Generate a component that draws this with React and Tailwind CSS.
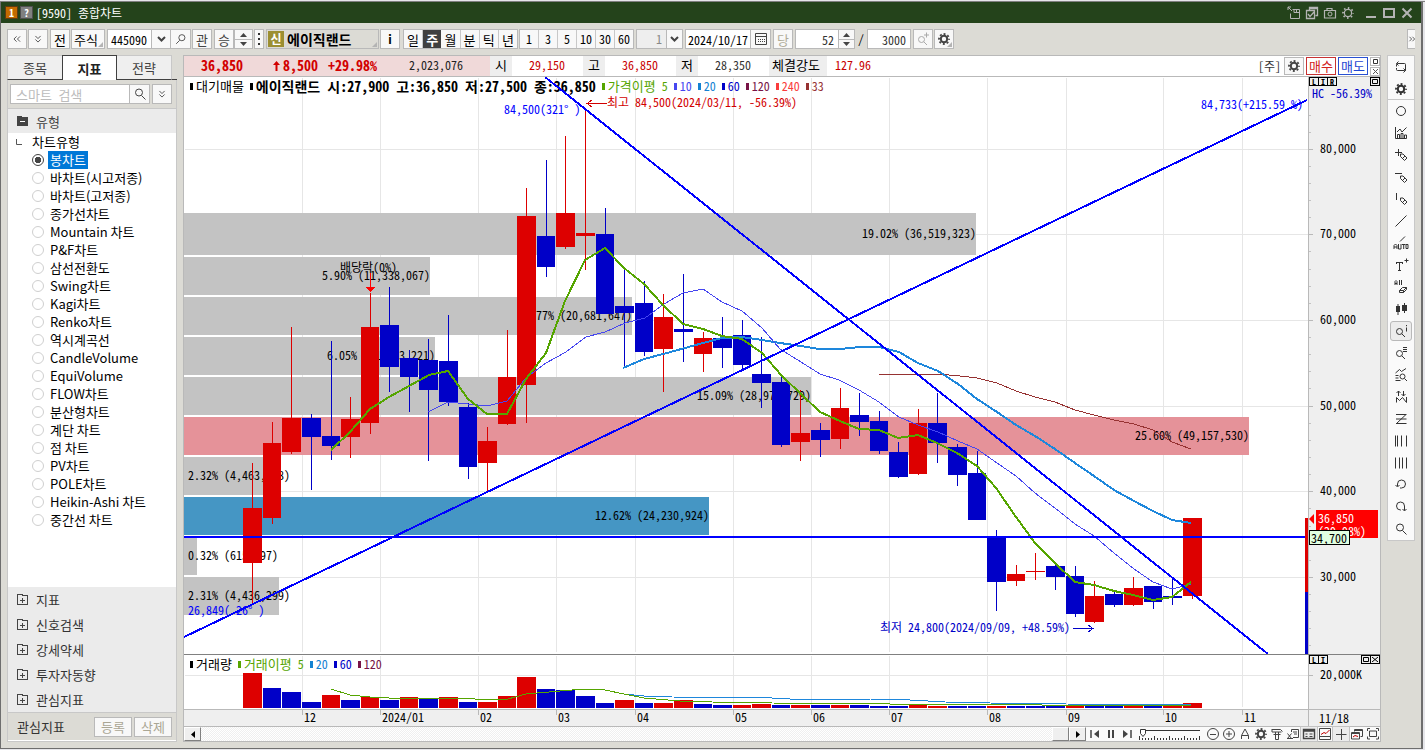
import React from "react";

const X0 = 184;
const PLOT_W = 1124;
const Y0 = 77;
const PLOT_H = 577;
const RED = "#dd0000";
const BLUE = "#0000c8";

const MONTHS = [
  [302, "12"], [380, "2024/01"], [478, "02"], [556, "03"], [635, "04"], [733, "05"],
  [811, "06"], [889, "07"], [987, "08"], [1066, "09"], [1163, "10"], [1242, "11"],
];
const PRICES = [[149, "80,000"], [234, "70,000"], [320, "60,000"], [406, "50,000"], [491, "40,000"], [577, "30,000"]];
const MINOR = [115, 132, 166, 183, 200, 217, 251, 269, 286, 303, 337, 354, 371, 388, 423, 440, 457, 474, 508, 526, 543, 560, 594, 611, 628, 645];

const BANDS = [
  [213, 42, 976, "#c3c3c3"], [257, 38, 430, "#c3c3c3"], [297, 38, 632, "#c3c3c3"], [337, 38, 435, "#c3c3c3"],
  [377, 38, 811, "#c3c3c3"], [417, 38, 1249, "#e59299"], [457, 38, 279, "#c3c3c3"], [497, 38, 709, "#4596c4"],
  [538, 37, 197, "#c3c3c3"], [577, 38, 279, "#c3c3c3"],
];

// left, width, body top, body bottom, high, low, centre, rising, volume top, volume rising
const CANDLES = [
  [243, 19, 508, 563, 463, 604, 252, 1, 673, 1],
  [263, 18, 443, 518, 422, 524, 272, 1, 688, 0],
  [282, 19, 418, 452, 327, 454, 291, 1, 692, 0],
  [302, 19, 418, 437, 414, 490, 311, 0, 702, 0],
  [322, 18, 436, 446, 341, 460, 331, 0, 695, 1],
  [341, 19, 419, 437, 397, 458, 350, 1, 700, 0],
  [361, 18, 327, 423, 293, 434, 370, 1, 697, 1],
  [380, 19, 325, 367, 287, 392, 389, 0, 700, 0],
  [400, 18, 358, 377, 350, 412, 409, 0, 697, 1],
  [419, 19, 360, 390, 339, 461, 428, 0, 699, 0],
  [439, 19, 361, 402, 315, 406, 448, 0, 697, 1],
  [459, 18, 407, 467, 403, 479, 468, 0, 702, 0],
  [478, 19, 441, 463, 427, 492, 487, 1, 702, 1],
  [498, 18, 377, 424, 330, 425, 507, 1, 696, 1],
  [517, 19, 216, 385, 188, 423, 526, 1, 677, 1],
  [537, 18, 236, 267, 160, 277, 546, 0, 689, 0],
  [556, 19, 213, 247, 136, 249, 565, 1, 690, 0],
  [576, 19, 233, 236, 110, 270, 585, 1, 696, 0],
  [596, 18, 234, 314, 208, 314, 605, 0, 703, 0],
  [615, 19, 306, 313, 269, 368, 624, 0, 700, 1],
  [635, 18, 303, 352, 281, 356, 644, 0, 703, 0],
  [654, 19, 317, 349, 294, 392, 663, 1, 703, 1],
  [674, 19, 329, 332, 274, 362, 683, 0, 700, 1],
  [694, 18, 338, 354, 332, 372, 703, 1, 704, 0],
  [713, 19, 338, 348, 317, 368, 722, 0, 705, 0],
  [733, 18, 335, 365, 320, 370, 742, 0, 705, 1],
  [752, 19, 374, 383, 337, 408, 761, 0, 704, 1],
  [772, 18, 382, 445, 376, 447, 781, 0, 705, 0],
  [791, 19, 433, 442, 390, 461, 800, 1, 705, 1],
  [811, 19, 430, 440, 423, 457, 820, 0, 705, 0],
  [831, 18, 408, 439, 388, 449, 840, 1, 705, 1],
  [850, 19, 415, 422, 393, 436, 859, 0, 705, 0],
  [870, 18, 421, 451, 411, 454, 879, 0, 706, 0],
  [889, 19, 452, 477, 442, 478, 898, 0, 706, 0],
  [909, 18, 423, 474, 409, 475, 918, 1, 705, 1],
  [928, 19, 423, 443, 393, 463, 937, 0, 706, 1],
  [948, 19, 447, 475, 444, 486, 957, 0, 706, 0],
  [968, 18, 473, 520, 451, 520, 977, 0, 706, 0],
  [987, 19, 538, 582, 530, 611, 996, 0, 706, 1],
  [1007, 18, 574, 581, 565, 586, 1016, 1, 706, 0],
  [1026, 19, 571, 572, 553, 580, 1035, 1, 706, 0],
  [1046, 19, 566, 577, 565, 590, 1055, 0, 706, 0],
  [1066, 18, 576, 614, 566, 617, 1075, 0, 706, 1],
  [1085, 19, 596, 622, 581, 623, 1094, 1, 706, 0],
  [1105, 18, 594, 605, 592, 607, 1114, 0, 706, 0],
  [1124, 19, 588, 605, 577, 606, 1133, 1, 706, 1],
  [1144, 18, 586, 602, 586, 609, 1153, 0, 706, 0],
  [1163, 19, 596, 598, 578, 605, 1172, 0, 706, 1],
  [1183, 19, 518, 596, 518, 599, 1192, 1, 703, 1],
];

const MA5 = "331,450 350,432 370,409 389,397 409,386 429,375 448,371 468,399 487,414 507,414 526,379 546,353 565,301 585,260 605,248 624,268 644,284 663,305 683,324 703,329 722,336 742,339 762,353 782,376 801,394 820,412 840,421 859,429 879,430 898,438 918,435 937,443 957,453 977,466 996,488 1016,517 1035,543 1055,563 1075,582 1094,585 1114,591 1133,595 1153,600 1172,597 1191,582";
const MA10 = "428,412 448,402 468,404 487,406 507,401 526,378 546,363 566,352 586,337 605,332 625,323 645,318 664,304 683,293 703,289 722,302 742,311 762,328 780,349 801,362 820,374 839,380 859,390 879,402 899,417 918,425 938,432 958,441 977,449 997,463 1016,476 1035,493 1055,508 1075,524 1094,536 1114,553 1134,569 1153,582 1172,589 1191,584";
const MA20 = "623,368 644,359 667,353 703,343 722,338 742,337 762,340 780,343 801,346 819,349 840,349 860,347 879,347 887,349 899,352 918,363 938,371 958,384 977,399 997,412 1016,425 1035,436 1055,449 1075,463 1094,476 1114,490 1134,501 1153,511 1172,520 1191,523";
const MA33 = "879,375 890,374 918,374 938,374 960,376 977,378 997,383 1016,391 1035,397 1055,402 1075,410 1094,415 1114,420 1134,424 1153,430 1172,442 1191,449";
const VMA5 = "331,689 350,695 370,697 389,698 420,698 460,698 475,699 508,699 526,694 560,691 585,689 605,690 624,694 644,698 680,701 712,702 772,703 890,704 1191,706";
const VMA20 = "624,694 644,696 672,697 772,698 790,699 870,699 910,700 945,702 990,703 1066,704 1191,705";

const TREE = [
  "봉차트", "바차트(시고저종)", "바차트(고저종)", "종가선차트", "Mountain 차트", "P&F차트", "삼선전환도", "Swing차트",
  "Kagi차트", "Renko차트", "역시계곡선", "CandleVolume", "EquiVolume", "FLOW차트", "분산형차트", "계단 차트", "점 차트",
  "PV차트", "POLE차트", "Heikin-Ashi 차트", "중간선 차트",
];

/* ---------- icons ---------- */

function Icon({ children, size = 16, className = "" }) {
  return (
    <svg width={size} height={size} viewBox="0 0 16 16" fill="none" stroke="currentColor" strokeWidth="1" className={`shrink-0 ${className}`} aria-hidden="true">
      {children}
    </svg>
  );
}

const gear = (
  <>
    <circle cx="8" cy="8" r="3.2" strokeWidth="2" />
    <circle cx="8" cy="8" r="5" strokeWidth="1.8" strokeDasharray="1.96 1.967" strokeDashoffset="0.98" />
  </>
);
const gearThin = (
  <>
    <circle cx="8" cy="8" r="3.6" strokeWidth="1.2" />
    <circle cx="8" cy="8" r="5" strokeWidth="1.8" strokeDasharray="1.5 2.427" strokeDashoffset="0.75" />
  </>
);
const glass = <path d="M10.5 6.5a3.5 3.5 0 1 1-7 0a3.5 3.5 0 1 1 7 0zM9.5 9.5L13.5 13.5" />;
const glassLow = <path d="M9.5 8.5a3 3 0 1 1-6 0a3 3 0 1 1 6 0zM8.8 10.8L12 14" />;
const pencil = <path d="M7.5 9.5v-2.5h2.5l4 4l-2.5 2.5zM9.5 11.5l2.5-2.5" />;
const chevRight = <path d="M4.5 5l3 3l-3 3M8.5 5l3 3l-3 3" />;
const chevLeft = <path d="M7.5 5l-3 3l3 3M11.5 5l-3 3l3 3" />;
const chevDown = <path d="M5 4.5l3 3l3-3M5 8.5l3 3l3-3" />;

const SIDE_TOOLS = [
  ["새로고침", <path d="M3.5 7.5V5.5a1 1 0 0 1 1-1h7a1 1 0 0 1 1 1v6M5.5 2.5l-2 2l2 2M12.5 8.5v2a1 1 0 0 1-1 1h-7a1 1 0 0 1-1-1v-1.5M10.500 13.500l2-2l-2-2" />],
  ["설정", gear],
  ["원", <circle cx="8" cy="8" r="4.500" />],
  ["지표 차트", <path d="M2.500 2v11.500h11M4.500 13V9.500h2V13M8 13V8.500h2V13M11.500 13V10h2v3.500M4 7l3-3l2 3l4.500-4.500" />],
  ["십자선", <><path d="M2 5.500h7M5.500 2v7" />{pencil}</>],
  ["수평선", <><path d="M2 4.500h7" />{pencil}</>],
  ["수직선", <><path d="M3.500 2v7" />{pencil}</>],
  ["추세선", <path d="M2.500 13.500L13.500 2.500" />],
  ["자동추세선", <><path d="M7 6.500L12 1.500" /><path d="M1 14V10.500l1.500-1.500L4 10.500V14M1 12h3M5.500 9v5h2.500V9M9 9.500h3.500M10.700 9.500V14M13 9.500h2v4h-2z" /></>],
  ["문자", <path d="M3 5.500h7M3.500 5v2M9.500 5v2M6.500 5.500v8M5 13.500h3M11.500 3.500h4M13.500 1.500v4" />],
  ["모두 지우기", <><path d="M2 6V2.500L3 1.500l1 1V6M2 4.500h2M6.500 1v5M8.500 1v5" /><path d="M6.500 13.500v-2l3-3h4v2l-3 3zM6.500 11.500h4l3-3M10.500 11.500v2" /></>],
  ["봉", <><rect x="3" y="5" width="4" height="6" fill="currentColor" stroke="none" /><rect x="9" y="4" width="5" height="6" fill="currentColor" stroke="none" /><path d="M5 3v11M11.500 2v10" /></>],
  ["데이터 보기", <>{glassLow}<path d="M13.500 4.500v4M13.500 2v1.200" /></>],
  ["목록 검색", <>{glassLow}<path d="M10 2.500h4M10 4.500h4M10 6.500h4" /></>],
  ["차트 검색", <><path d="M2.500 6l4-3.500l2 2l4.500-3M2.500 8.500h3M2.500 11h3M2.500 13.500h5" /><circle cx="9.500" cy="9.500" r="2.500" /><path d="M11.500 11.500l2.500 2.500" /></>],
  ["패턴", <path d="M3.500 13.500V8.500l3 3l3-3l4 5V8M5.500 7V2M3.500 4l2-2l2 2M10.500 2v5M8.500 5l2 2l2-2" />],
  ["피보나치", <path d="M3 3.500h10.500M3 8h10.500M3 12.500h10.500M13 3.500l-9.500 9" />],
  ["등분선", <path d="M2.500 2.500v11M4.500 2.500v11M8.500 2.500v11M13.500 2.500v11" />],
  ["균등선", <path d="M2.500 2.500v11M6.500 2.500v11M9.500 2.500v11M13.500 2.500v11" />],
  ["실행 취소", <path d="M4.500 9V7a4 4 0 1 1 4 4h-1.500M2.500 8l2 2l2-2" />],
  ["다시 실행", <path d="M8 11H7.500a4 4 0 1 1 4-4v4.500M9.500 10l2 2l2-2" />],
  ["찾기", glass],
];

const FOOT_TOOLS = [
  ["축소", <><circle cx="8" cy="8" r="5.500" /><path d="M5 8.500h6" /></>],
  ["확대", <><circle cx="8" cy="8" r="5.500" /><path d="M5 8h6M8 5v6" /></>],
  ["글꼴", <path d="M4.500 13V9.500L8 3l3.500 6.500V13M4.500 9.500h7" />],
  ["환경설정", gear],
  ["도구", <path d="M3 3.500h8.500l2 2M3 3v3h9.500M6.500 6v7.500h3V6M4.500 8.500h7" />],
  ["내보내기", <path d="M6.500 6V3.500h7v8H8M8 6h4M9 8h3M2.500 7.500l4 5M6.500 7.500l-4 5M2 12.500h6" />],
  ["데이터창", <><path d="M2.500 3.500h11v9h-11zM2.500 5h11" strokeWidth="1.400" /><path d="M4.500 8h2M4.500 10.500h2M8.500 8h3M8.500 10.500h3" /></>],
  ["지표창", <><path d="M2.500 2.500h11v11h-11zM2.500 10.500h11" /><path d="M4 8.500l3-2l2 1l3.500-3.500" stroke="#c00000" /></>],
  ["십자선", <path d="M3 8.500h10.500M8.500 3v11" />],
  ["창 복사", <><path d="M5.500 5.500v-2h8v7h-2M5.500 4.500h8M2.500 6.500h8v6.500h-8zM2.500 7.500h8" /><path d="M4 11l2-1.500l3 1" stroke="#c00000" /></>],
  ["전체화면", <path d="M2.500 5V2.500H5M11 2.500h2.500V5M13.500 10.500V13H11M5 13H2.500v-2.500M4.500 5h7v5.500h-7z" />],
];
const FOOT_ACTIVE = [6, 8];

/* ---------- small controls ---------- */

const BTN = "flex h-5 shrink-0 items-center justify-center border border-[#b9b9b9] bg-[#f8f8f8]";

function Btn({ label, className = "w-5", children }) {
  return (
    <button type="button" aria-label={label} className={`${BTN} ${className}`}>
      {children}
    </button>
  );
}

function Stepper({ label, className }) {
  return (
    <div className={`flex shrink-0 flex-col justify-between border border-[#b9b9b9] bg-[#f8f8f8] ${className}`}>
      <button type="button" aria-label={`${label} 증가`} className="flex h-[9px] items-center justify-center">
        <svg width="7" height="4" viewBox="0 0 7 4" aria-hidden="true"><path d="M0 4L3.500 0L7 4z" fill="#444" /></svg>
      </button>
      <span className="h-px bg-[#b9b9b9]" />
      <button type="button" aria-label={`${label} 감소`} className="flex h-[8px] items-center justify-center">
        <svg width="7" height="4" viewBox="0 0 7 4" aria-hidden="true"><path d="M0 0L3.500 4L7 0z" fill="#444" /></svg>
      </button>
    </div>
  );
}

const Chevron = () => (
  <svg width="9" height="6" viewBox="0 0 9 6" aria-hidden="true"><path d="M1 1L4.500 4.500L8 1" fill="none" stroke="#444" strokeWidth="2" /></svg>
);
const Corner = () => (
  <svg width="5" height="5" viewBox="0 0 5 5" className="absolute right-px bottom-px" aria-hidden="true"><path d="M5 0V5H0z" fill="#b4b4b4" /></svg>
);

function TitleBar() {
  const tools = [
    ["창 분리", <path d="M2 2l4 4M2 5V2h3M6.500 4.500h7v9h-9v-5M8 4.500v3h6M10.500 4.500v3" />],
    ["화면 복사", <path d="M5.500 5V2.500h8v8h-2M2.500 5.500h8v8h-8zM4 9l2 2.500l4-4.500M5.500 3.500h8" strokeWidth="1.300" />],
    ["캡처", <><path d="M2.500 5.500h11v7.500h-11zM5 5v-1.500h5V5" strokeWidth="1.200" /><circle cx="8" cy="9" r="2" /></>],
    ["설정", gearThin],
  ];
  return (
    <header className="flex h-[21px] shrink-0 items-center bg-[#24431b] pr-[6px] pl-1 text-white">
      <span className="flex size-[13px] items-center justify-center border border-[#5f3a10] bg-[#c46a00] text-[10px] leading-none font-bold">1</span>
      <span className="ml-[2px] flex size-[13px] items-center justify-center border border-[#4f4f4f] bg-[#808080] text-[10px] leading-none font-bold">?</span>
      <h1 className="ml-[3px] text-xs leading-4">[9590] 종합차트</h1>
      <div className="ml-auto flex items-center gap-[2px] text-[#b4b4b4]">
        {tools.map(([l, d]) => (
          <button key={l} type="button" aria-label={l}><Icon>{d}</Icon></button>
        ))}
        <button type="button" aria-label="최소화" className="ml-[5px]"><Icon><path d="M3 12h10" strokeWidth="2" /></Icon></button>
        <button type="button" aria-label="최대화"><Icon><path d="M3 4h10v8H3z" strokeWidth="2" /></Icon></button>
        <button type="button" aria-label="닫기"><Icon><path d="M3.500 3.500l9 9M12.500 3.500l-9 9" strokeWidth="2" /></Icon></button>
      </div>
    </header>
  );
}

function Toolbar() {
  const periods = ["일", "주", "월", "분", "틱", "년"];
  const minutes = ["1", "3", "5", "10", "30", "60"];
  return (
    <div className="flex h-8 shrink-0 items-start overflow-hidden pt-[6px] pr-[6px] pl-[6px] text-xs leading-none text-black">
      <Btn label="이전"><Icon size={14} className="text-[#444]">{chevLeft}</Icon></Btn>
      <Btn label="펼치기" className="ml-px w-5"><Icon size={14} className="text-[#444]">{chevDown}</Icon></Btn>
      <Btn className="ml-[2px] w-5 text-[13px]">전</Btn>
      <Btn className="relative ml-px w-[34px] pr-1 text-[13px]">주식<Corner /></Btn>
      <input aria-label="종목코드" defaultValue="445090" className="ml-[2px] h-5 w-[45px] border border-[#b9b9b9] bg-white px-[3px] text-xs" />
      <Btn label="종목 목록" className="w-[19px] border-l-0"><Chevron /></Btn>
      <Btn label="종목 검색" className="w-5 border-l-0"><Icon size={14} className="-scale-x-100 text-[#444]">{glass}</Icon></Btn>
      <Btn className="ml-px w-5 text-[13px] text-[#444]">관</Btn>
      <Btn className="ml-[2px] w-5 text-[13px] text-[#444]">승</Btn>
      <Stepper label="종목" className="h-5 w-[19px]" />
      <Btn label="더보기" className="ml-px w-[10px] flex-col gap-[3px]">
        <i className="size-[2px] bg-[#333]" /><i className="size-[2px] bg-[#333]" /><i className="size-[2px] bg-[#333]" />
      </Btn>
      <button type="button" className="relative ml-[2px] flex h-5 w-[113px] shrink-0 items-center gap-[3px] border border-[#b9b9b9] bg-[#dcdbd5] pl-px text-[14px] leading-none font-bold">
        <span className="flex size-4 items-center justify-center bg-[#9c8f32] text-xs leading-none text-white">신</span>
        에이직랜드
        <Corner />
      </button>
      <Btn className="ml-px w-5 font-bold">i</Btn>
      <div className="ml-[3px] flex w-[115px] shrink-0 border border-[#b9b9b9] text-[13px]">
        {periods.map((p) => (
          <button key={p} type="button" className={p === "주" ? "h-[18px] flex-1 bg-[#404040] font-bold text-white" : "h-[18px] flex-1 border-r border-[#c8c8c8] bg-[#f8f8f8] last:border-r-0"}>{p}</button>
        ))}
      </div>
      <div className="ml-px flex w-[115px] shrink-0 border border-[#b9b9b9]">
        {minutes.map((p) => (
          <button key={p} type="button" className="h-[18px] flex-1 border-r border-[#c8c8c8] bg-[#f8f8f8] last:border-r-0">{p}</button>
        ))}
      </div>
      <div className="relative ml-[2px] flex shrink-0">
        <select aria-label="주기" className="h-5 w-[47px] appearance-none border border-[#b9b9b9] bg-[#eeeeee] pr-5 text-right text-xs text-[#888]" defaultValue="1">
          <option>1</option>
        </select>
        <span className="pointer-events-none absolute top-0 right-0 flex h-5 w-[17px] items-center justify-center border border-[#b9b9b9] bg-[#f8f8f8]"><Chevron /></span>
      </div>
      <input aria-label="기준일" defaultValue="2024/10/17" className="ml-[2px] h-5 w-[66px] border border-[#b9b9b9] bg-white px-[2px] text-xs" />
      <Btn label="달력" className="w-5 border-l-0">
        <Icon size={16} className="text-[#444]"><path d="M2.500 2.500h11v11h-11zM2.500 5.500h11" /><path d="M5 8.500h7M5 10.500h7" strokeDasharray="1 1" /></Icon>
      </Btn>
      <Btn className="ml-[2px] w-5 text-[13px] text-[#b0ac98]">당</Btn>
      <input aria-label="조회 개수" defaultValue="52" className="ml-[2px] h-5 w-[44px] border border-[#b9b9b9] bg-white pr-1 text-right text-xs text-[#333]" />
      <Stepper label="조회 개수" className="h-5 w-4 border-l-0" />
      <span className="w-3 text-center leading-5">/</span>
      <input aria-label="전체 개수" defaultValue="3000" className="h-5 w-[44px] border border-[#b9b9b9] bg-white pr-1 text-right text-xs text-[#333]" />
      <Btn label="추가 조회" className="ml-[2px] w-5 text-[#aaa]"><Icon>{glassLow}<path d="M11.500 1.500v5M9 4h5" /></Icon></Btn>
      <Btn label="차트 설정" className="relative ml-px w-5 text-[#444]"><Icon>{gear}</Icon><Corner /></Btn>
      <Btn label="도구 더보기" className="ml-auto w-2 border-r-0"><Icon size={12} className="text-[#333]">{chevRight}</Icon></Btn>
    </div>
  );
}

function FolderPlus() {
  return (
    <svg width="11" height="11" viewBox="0 0 11 11" fill="none" stroke="#444" shapeRendering="crispEdges" aria-hidden="true">
      <path d="M0.500 0.500h5v1h5v9h-10zM3 6h5M5.500 3.500v5" />
    </svg>
  );
}

function Sidebar() {
  return (
    <aside className="flex w-[170px] shrink-0 flex-col text-[13px] leading-none text-[#333]">
      <div role="tablist" className="flex h-[25px] shrink-0 text-[#444]">
        <button type="button" role="tab" aria-selected="false" className="w-[55px] border border-r-0 border-[#c8c8c8] border-b-[#404040] bg-[#efefef]">종목</button>
        <button type="button" role="tab" aria-selected="true" className="w-[55px] border border-b-0 border-[#404040] bg-white font-bold text-[#222]">지표</button>
        <button type="button" role="tab" aria-selected="false" className="w-[55px] border border-l-0 border-[#c8c8c8] border-b-[#404040] bg-[#efefef]">전략</button>
        <span className="flex-1 border-b border-[#404040]" />
      </div>
      <div className="flex h-7 shrink-0 items-start border-x border-[#c8c8c8] px-[2px] pt-1">
        <input aria-label="스마트 검색" placeholder="스마트 검색" className="h-5 min-w-0 flex-1 border border-[#b9b9b9] bg-white px-[5px] text-[13px] placeholder:text-[#bcbcbc]" />
        <Btn label="검색" className="w-5 border-l-0"><Icon className="text-[#444]">{glass}</Icon></Btn>
        <Btn label="모두 펼치기" className="mx-[2px] w-5"><Icon size={14} className="text-[#444]">{chevDown}</Icon></Btn>
      </div>
      <div className="flex min-h-0 flex-1 flex-col border border-[#c8c8c8] bg-[#ebebeb]">
        <button type="button" className="flex h-6 shrink-0 items-center gap-2 pl-[9px] text-[#444]">
          <svg width="11" height="10" viewBox="0 0 11 10" aria-hidden="true"><path d="M0 0h5v1h6v9H0z" fill="#444" /><path d="M3 5.500h5" stroke="#fff" /></svg>
          유형
        </button>
        <div role="radiogroup" aria-label="차트유형" className="min-h-0 flex-1 overflow-hidden bg-white font-['Noto_Sans_CJK_KR',sans-serif] leading-[18px] text-black">
          <div className="flex h-[18px] items-center gap-[10px] pl-2">
            <svg width="6" height="6" viewBox="0 0 6 6" aria-hidden="true"><path d="M0.500 0v5.500H6" stroke="#555" fill="none" /></svg>
            <span>차트유형</span>
          </div>
          {TREE.map((t, i) => (
            <label key={t} className="flex h-[18px] items-center gap-1 pl-6">
              <input type="radio" name="charttype" defaultChecked={i === 0} className="peer size-3 appearance-none rounded-full border border-[#cfcfcf] bg-white checked:border-[#444] checked:bg-[radial-gradient(circle,#444_0_3px,#fff_3.5px)]" />
              <span className="px-[2px] peer-checked:bg-[#0078d7] peer-checked:text-white">{t}</span>
            </label>
          ))}
        </div>
        {["지표", "신호검색", "강세약세", "투자자동향", "관심지표"].map((t) => (
          <button key={t} type="button" className="flex h-[25px] shrink-0 items-center gap-2 pl-[9px]">
            <FolderPlus />{t}
          </button>
        ))}
        <div className="flex h-[29px] shrink-0 items-center gap-[2px] border-t border-b border-t-[#c8c8c8] border-b-white bg-[#dcdbd5] pr-1 pl-[9px]">
          <span className="flex-1">관심지표</span>
          <Btn className="w-[38px] bg-[#efefef] text-[#aaa694]">등록</Btn>
          <Btn className="w-[38px] bg-[#efefef] text-[#aaa694]">삭제</Btn>
        </div>
      </div>
    </aside>
  );
}

function QuoteBar() {
  const cells = [["시", "29,150", "text-[#c80000]"], ["고", "36,850", "text-[#c80000]"], ["저", "28,350", "text-[#333]"]];
  return (
    <div className="flex h-[22px] shrink-0 items-stretch border-y border-[#b9b9b9] bg-white text-xs/[18px]">
      <div className="flex w-[306px] bg-[#f0d9d9] pl-[17px] text-[14px]/[18px] font-bold text-[#d20000]">
        <span>36,850</span>
        <span className="ml-[30px] flex">
          <svg width="7" height="10" viewBox="0 0 7 10" className="mt-[5px] mr-[3px]" aria-hidden="true"><path d="M3.500 0L7 4H4.500V10H2.500V4H0z" fill="#d20000" /></svg>
          8,500
        </span>
        <span className="ml-[10px]">+29.98%</span>
        <span className="ml-auto pr-[27px] text-xs/[18px] font-normal text-[#222]">2,023,076</span>
      </div>
      {cells.map(([k, v, c]) => (
        <React.Fragment key={k}>
          <span className="w-[22px] bg-[#eeeeee] text-center text-[13px]/[18px] text-black">{k}</span>
          <span className={`w-[71px] pr-[18px] text-right ${c}`}>{v}</span>
        </React.Fragment>
      ))}
      <span className="w-[58px] bg-[#eeeeee] pl-[3px] text-[13px]/[18px] text-black">체결강도</span>
      <span className="pl-2 text-[#c80000]">127.96</span>
      <div className="ml-auto flex items-center gap-[2px]">
        <span className="text-[#333]">[주]</span>
        <button type="button" aria-label="차트 설정" className="ml-px flex h-[18px] w-5 items-center justify-center border border-[#b9b9b9] bg-[#f8f8f8] text-[#444]"><Icon>{gear}</Icon></button>
        <button type="button" className="h-[18px] w-[30px] border border-[#c83232] bg-white text-[13px]/[16px] text-[#d22020]">매수</button>
        <button type="button" className="h-[18px] w-[30px] border border-[#2850d2] bg-white text-[13px]/[16px] text-[#1e46d2]">매도</button>
        <div className="flex w-[10px] flex-col gap-px">
          <button type="button" aria-label="최대화" className="flex h-[9px] items-center justify-center border border-[#b9b9b9] text-[#333]"><svg width="5" height="5" viewBox="0 0 5 5" aria-hidden="true"><path d="M.5.5h4v4h-4z" fill="none" stroke="#333" /></svg></button>
          <button type="button" aria-label="닫기" className="flex h-[9px] items-center justify-center border border-[#b9b9b9] text-[#333]"><svg width="5" height="5" viewBox="0 0 5 5" aria-hidden="true"><path d="M0 0l5 5M5 0L0 5" stroke="#555" /></svg></button>
        </div>
      </div>
    </div>
  );
}

function Note({ x, y, className = "text-black", children }) {
  return (
    <span
      className={`absolute text-xs/[12px] whitespace-pre ${className}`}
      style={{ left: `${((x - X0) / PLOT_W) * 100}%`, top: `${((y - 7 - Y0) / PLOT_H) * 100}%` }}
    >
      {children}
    </span>
  );
}

function Legend({ items }) {
  return (
    <div className="absolute top-[2px] left-[6px] flex items-center gap-[6px] text-xs/[14px] whitespace-pre">
      {items.map(({ color, name, quote, n }) => (
        <span key={color + (name || n || "")} className={`flex items-center gap-[3px] ${color}`}>
          <i className="mt-px h-[7px] w-[3px] bg-current" />
          {name && <span className="text-[13px]/[14px]">{name}</span>}
          {quote && <span className="flex gap-[7px] text-[14px]/[14px]">{quote.map((s) => <b key={s}>{s}</b>)}</span>}
          {n && <span className={name ? "pl-[3px]" : ""}>{n}</span>}
        </span>
      ))}
    </div>
  );
}

function PricePlot() {
  return (
    <div className="relative min-w-0 flex-1 overflow-hidden bg-white">
      <svg className="absolute inset-0 size-full" viewBox={`${X0} ${Y0} ${PLOT_W} ${PLOT_H}`} preserveAspectRatio="none" shapeRendering="crispEdges" aria-hidden="true">
        {MONTHS.map(([x]) => <rect key={x} x={x} y="78" width="1" height="574" fill="#e6e6e6" />)}
        {PRICES.map(([y]) => <rect key={y} x="185" y={y} width="1123" height="1" fill="#e6e6e6" />)}
        {BANDS.map(([y, h, r, c]) => <rect key={y} x={X0} y={y} width={r - X0} height={h} fill={c} />)}
      </svg>
      <Note x={862} y={234}>19.02% (36,519,323)</Note>
      <Note x={322} y={276}>5.90% (11,338,067)</Note>
      <Note x={340} y={268}>배당락(0%)</Note>
      <Note x={518} y={316}>10.77% (20,681,647)</Note>
      <Note x={327} y={356}>6.05% (11,623,221)</Note>
      <Note x={697} y={396}>15.09% (28,970,729)</Note>
      <Note x={1135} y={436}>25.60% (49,157,530)</Note>
      <Note x={188} y={476}>2.32% (4,463,428)</Note>
      <Note x={595} y={516}>12.62% (24,230,924)</Note>
      <Note x={188} y={556}>0.32% (615,597)</Note>
      <Note x={188} y={596}>2.31% (4,436,299)</Note>
      <Note x={188} y={611} className="text-[#0000ff]">26,849( 26° )</Note>
      <Note x={504} y={110} className="text-[#0000ff]">84,500(321° )</Note>
      <Note x={607} y={103} className="text-[#d20000]">최고 84,500(2024/03/11, -56.39%)</Note>
      <Note x={1201} y={105} className="text-[#0000ff]">84,733(+215.59 %)</Note>
      <Note x={880} y={628} className="text-[#0000c8]">최저 24,800(2024/09/09, +48.59%)</Note>
      <Legend
        items={[
          { color: "text-black", name: "대기매물" },
          { color: "text-[#000000]", quote: ["에이직랜드", "시:27,900", "고:36,850", "저:27,500", "종:36,850"] },
          { color: "text-[#55a500]", name: "가격이평", n: "5" },
          { color: "text-[#4646f0]", n: "10" },
          { color: "text-[#1482d2]", n: "20" },
          { color: "text-[#0000c8]", n: "60" },
          { color: "text-[#781446]", n: "120" },
          { color: "text-[#fa3c3c]", n: "240" },
          { color: "text-[#963232]", n: "33" },
        ]}
      />
      <svg className="absolute inset-0 size-full" viewBox={`${X0} ${Y0} ${PLOT_W} ${PLOT_H}`} preserveAspectRatio="none" shapeRendering="crispEdges" role="img" aria-label="에이직랜드 주봉 차트">
        {CANDLES.map(([x, w, t, b, hi, lo, cx, up]) => (
          <g key={x} fill={up ? RED : BLUE}>
            <rect x={cx} y={hi} width="1" height={lo - hi} />
            <rect x={x} y={t} width={w} height={b - t} />
          </g>
        ))}
        <path d="M370 273h1v14h5l-6 5l-5-5h5z" fill="#ff0000" />
        <g fill="none">
          <polyline points={MA33} stroke="#963232" />
          <polyline points={MA20} stroke="#1e87dc" strokeWidth="2" />
          <polyline points={MA10} stroke="#4646f0" />
          <polyline points={MA5} stroke="#55a500" strokeWidth="2" />
          <path d="M545 77L1268 654M184 637L1307 100M184 537H1308" stroke="#0000ff" strokeWidth="2" />
          <path d="M587 103.500h20M592 100l-5 3.500l5 3.500" stroke="#d20000" />
          <path d="M1073 628.500h20M1088 625l5 3.500l-5 3.500" stroke="#0000c8" />
        </g>
        <rect x="1305" y="518" width="3" height="74" fill={RED} />
        <rect x="1305" y="592" width="3" height="62" fill={BLUE} />
      </svg>
    </div>
  );
}

function TinyBtn({ label, children }) {
  return (
    <button type="button" aria-label={label} className="-mr-px flex h-[9px] w-[10px] items-center justify-center border border-black bg-[#efefef] text-[8px] leading-none font-bold text-black">
      {children}
    </button>
  );
}
const Square = () => <svg width="6" height="5" viewBox="0 0 6 5" aria-hidden="true"><path d="M.5.5h5v4h-5z" fill="none" stroke="#000" /></svg>;
const Cross = () => <svg width="6" height="5" viewBox="0 0 6 5" aria-hidden="true"><path d="M0 0l6 5M6 0L0 5" stroke="#000" /></svg>;

const pctY = (y) => `${((y - Y0) / PLOT_H) * 100}%`;

function PriceAxis() {
  return (
    <div className="relative w-[72px] shrink-0 overflow-hidden border-l border-[#b9b9b9] bg-[#efefef] text-xs/[12px] text-black">
      <div className="flex justify-between pr-px">
        <div className="flex"><TinyBtn label="왼쪽">L</TinyBtn><TinyBtn label="기준">I</TinyBtn><TinyBtn label="오른쪽">R</TinyBtn></div>
        <TinyBtn label="최대화"><Square /></TinyBtn>
      </div>
      <span className="mt-px block pl-[3px] text-[#0000c8]">HC -56.39%</span>
      {MINOR.map((y) => <i key={y} className="absolute left-0 h-px w-[2px] bg-[#c3c3c3]" style={{ top: pctY(y) }} />)}
      {PRICES.map(([y]) => <i key={y} className="absolute left-0 h-px w-1 bg-[#b9b9b9]" style={{ top: pctY(y) }} />)}
      {PRICES.map(([y, t]) => <span key={t} className="absolute left-[11px]" style={{ top: pctY(y - 7) }}>{t}</span>)}
      <div className="absolute left-[7px] w-[62px] bg-[#ff0000] pt-px pb-px pl-[2px] leading-[13px] text-white" style={{ top: pctY(510) }}>
        36,850<br />(29.98%)
      </div>
      <svg width="5" height="10" viewBox="0 0 5 10" className="absolute left-0" style={{ top: pctY(514) }} aria-hidden="true"><path d="M5 0v10L0 5z" fill="#ff0000" /></svg>
      <div className="absolute left-0 w-[41px] border border-black bg-[#e1ffe1] pl-px leading-[13px]" style={{ top: pctY(530) }}>34,700</div>
    </div>
  );
}

function VolumePanel() {
  return (
    <div className="flex h-[55px] shrink-0 border-t border-[#808080]">
      <div className="relative min-w-0 flex-1 bg-white">
        <svg className="absolute inset-0 size-full" viewBox={`${X0} 655 ${PLOT_W} 54`} preserveAspectRatio="none" shapeRendering="crispEdges" role="img" aria-label="거래량 차트">
          {MONTHS.map(([x]) => <rect key={x} x={x} y="656" width="1" height="51" fill="#e6e6e6" />)}
          <rect x="185" y="675" width="1123" height="1" fill="#e6e6e6" />
          {CANDLES.map(([x, w, , , , , , , v, up]) => <rect key={x} x={x} y={v} width={w} height={708 - v} fill={up ? RED : BLUE} />)}
          <g fill="none">
            <polyline points={VMA20} stroke="#1e87dc" />
            <polyline points={VMA5} stroke="#55a500" />
          </g>
        </svg>
        <Legend
          items={[
            { color: "text-black", name: "거래량" },
            { color: "text-[#55a500]", name: "거래이평", n: "5" },
            { color: "text-[#1482d2]", n: "20" },
            { color: "text-[#0000c8]", n: "60" },
            { color: "text-[#781446]", n: "120" },
          ]}
        />
      </div>
      <div className="relative w-[72px] shrink-0 border-l border-[#b9b9b9] bg-[#efefef] text-xs/[12px] text-black">
        <div className="flex justify-between pr-px">
          <div className="flex"><TinyBtn label="왼쪽">L</TinyBtn><TinyBtn label="기준">I</TinyBtn></div>
          <div className="flex"><TinyBtn label="최대화"><Square /></TinyBtn><TinyBtn label="닫기"><Cross /></TinyBtn></div>
        </div>
        <i className="absolute top-5 left-0 h-px w-1 bg-[#b9b9b9]" />
        <span className="block pt-1 pl-[11px]">20,000K</span>
      </div>
    </div>
  );
}

function TimeAxis() {
  return (
    <div className="flex h-[17px] shrink-0 border-t border-[#b9b9b9] bg-[#efefef] text-xs/[14px] text-black">
      <div className="relative min-w-0 flex-1 overflow-hidden">
        {MONTHS.map(([x, t]) => (
          <span key={x} className="absolute top-0 flex" style={{ left: `${((x - X0) / PLOT_W) * 100}%` }}>
            <i className="h-[5px] w-px bg-[#b9b9b9]" />
            <span className="pl-px">{t}</span>
          </span>
        ))}
      </div>
      <span className="w-[72px] shrink-0 border-l border-[#b9b9b9] pl-[10px] leading-4">11/18</span>
    </div>
  );
}

const RAISED = "flex h-[14px] w-[17px] shrink-0 items-center justify-center border border-t-white border-l-white border-r-[#808080] border-b-[#808080] bg-[#efefef]";

function ScrollRow() {
  return (
    <div className="flex h-[15px] shrink-0 border-t border-[#b9b9b9] bg-[#fafafa]">
      <button type="button" aria-label="왼쪽으로" className={RAISED}><svg width="4" height="7" viewBox="0 0 4 7" aria-hidden="true"><path d="M4 0v7L0 3.500z" /></svg></button>
      <div className="min-w-0 flex-1 bg-[repeating-conic-gradient(#efefef_0_25%,#fff_0_50%)] bg-[length:2px_2px]" />
      <div className={RAISED} />
      <button type="button" aria-label="오른쪽으로" className={RAISED}><svg width="4" height="7" viewBox="0 0 4 7" aria-hidden="true"><path d="M0 0v7l4-3.500z" /></svg></button>
      <div className="flex w-[294px] shrink-0 items-center pl-px text-[#444]">
        <button type="button" aria-label="처음"><Icon size={16}><path d="M4 4v8" strokeWidth="1.500" /><path d="M12 4v8L7 8z" fill="currentColor" stroke="none" /></Icon></button>
        <button type="button" aria-label="일시정지"><Icon size={16}><path d="M6 4v8M10 4v8" strokeWidth="2" /></Icon></button>
        <button type="button" aria-label="끝"><Icon size={16}><path d="M12 4v8" strokeWidth="1.500" /><path d="M4 4v8l5-4z" fill="currentColor" stroke="none" /></Icon></button>
        <div className="relative ml-1 h-[14px] w-[62px]">
          <svg width="62" height="14" viewBox="0 0 62 14" fill="none" stroke="#333" shapeRendering="crispEdges" aria-hidden="true">
            <path d="M3 3.500h58" />
            <path d="M0.500 9v4M15.500 9v4M30.500 9v4M45.500 9v4M60.500 9v4" />
            <path d="M3.500 11v2M6.500 11v2M9.500 11v2M12.500 11v2M18.500 11v2M21.500 11v2M24.500 11v2M27.500 11v2M33.500 11v2M36.500 11v2M39.500 11v2M42.500 11v2M48.500 11v2M51.500 11v2M54.500 11v2M57.500 11v2" />
            <path d="M1.500 2.500h5v4l-2.500 3l-2.500-3z" fill="#fff" shapeRendering="auto" />
          </svg>
          <input type="range" aria-label="확대 비율" defaultValue="0" className="absolute inset-0 size-full opacity-0" />
        </div>
        <div className="ml-1 flex flex-1 justify-between pr-px">
          {FOOT_TOOLS.map(([l, d], i) => (
            <button key={l} type="button" aria-label={l} className={FOOT_ACTIVE.includes(i) ? "flex h-[14px] w-4 items-center justify-center bg-[#ececec] outline outline-[#c3c3c3]" : "flex h-[14px] w-4 items-center justify-center"}>
              <Icon>{d}</Icon>
            </button>
          ))}
        </div>
      </div>
    </div>
  );
}

function SideTools() {
  return (
    <nav aria-label="차트 도구" className="flex w-7 shrink-0 flex-col items-stretch self-start border border-[#c8c8c8] bg-[#fafafa] text-[#333]">
      {SIDE_TOOLS.map(([l, d], i) => (
        <button
          key={l}
          type="button"
          aria-label={l}
          className={
            i === 12
              ? "mx-[2px] my-px flex h-5 items-center justify-center rounded-[3px] border border-[#b9b9b9] bg-[#ececec]"
              : i === 1
                ? "flex h-[22px] items-center justify-center border-b border-[#c8c8c8]"
                : "flex h-[22px] items-center justify-center"
          }
        >
          <Icon>{d}</Icon>
        </button>
      ))}
    </nav>
  );
}

export default function App() {
  return (
    <div className="flex h-screen min-h-[700px] flex-col overflow-hidden bg-[#e6e6ea] font-['Noto_Sans_Mono_CJK_KR','Noto_Sans_CJK_KR','Liberation_Mono',monospace]">
      <div className="h-[2px] shrink-0 border-b border-[#808080]" />
      <div className="mr-[2px] flex min-h-0 flex-1 flex-col border-r-2 border-b border-l border-[#6e6e6e] bg-[#dcdbd5]">
        <TitleBar />
        <Toolbar />
        <div className="flex min-h-0 flex-1 gap-[6px] px-[6px] pb-[6px]">
          <Sidebar />
          <main className="flex min-w-0 flex-1 flex-col border-x border-b border-[#b9b9b9]">
            <QuoteBar />
            <div className="flex min-h-0 flex-1">
              <PricePlot />
              <PriceAxis />
            </div>
            <VolumePanel />
            <TimeAxis />
            <ScrollRow />
          </main>
          <SideTools />
        </div>
      </div>
      <div className="h-px shrink-0" />
    </div>
  );
}
